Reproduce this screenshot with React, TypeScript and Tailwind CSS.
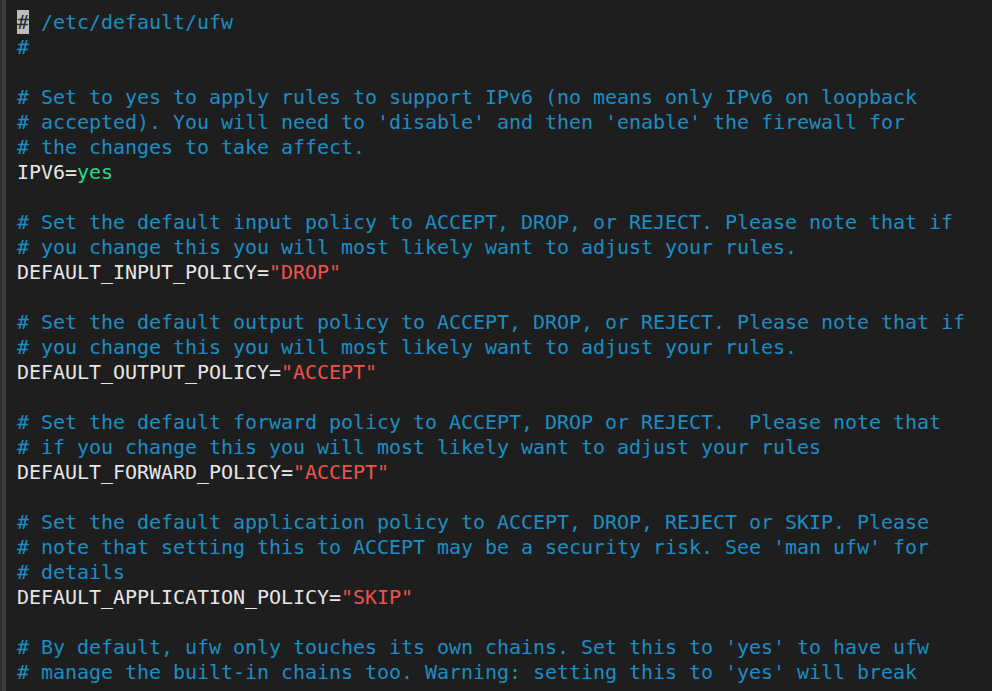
const lines: [string, 'c' | 'kv', string?][] = [
  ['# /etc/default/ufw', 'c'],
  ['#', 'c'],
  ['', 'c'],
  ['# Set to yes to apply rules to support IPv6 (no means only IPv6 on loopback', 'c'],
  ["# accepted). You will need to 'disable' and then 'enable' the firewall for", 'c'],
  ['# the changes to take affect.', 'c'],
  ['IPV6=', 'kv', 'yes'],
  ['', 'c'],
  ['# Set the default input policy to ACCEPT, DROP, or REJECT. Please note that if', 'c'],
  ['# you change this you will most likely want to adjust your rules.', 'c'],
  ['DEFAULT_INPUT_POLICY=', 'kv', '"DROP"'],
  ['', 'c'],
  ['# Set the default output policy to ACCEPT, DROP, or REJECT. Please note that if', 'c'],
  ['# you change this you will most likely want to adjust your rules.', 'c'],
  ['DEFAULT_OUTPUT_POLICY=', 'kv', '"ACCEPT"'],
  ['', 'c'],
  ['# Set the default forward policy to ACCEPT, DROP or REJECT.  Please note that', 'c'],
  ['# if you change this you will most likely want to adjust your rules', 'c'],
  ['DEFAULT_FORWARD_POLICY=', 'kv', '"ACCEPT"'],
  ['', 'c'],
  ['# Set the default application policy to ACCEPT, DROP, REJECT or SKIP. Please', 'c'],
  ["# note that setting this to ACCEPT may be a security risk. See 'man ufw' for", 'c'],
  ['# details', 'c'],
  ['DEFAULT_APPLICATION_POLICY=', 'kv', '"SKIP"'],
  ['', 'c'],
  ["# By default, ufw only touches its own chains. Set this to 'yes' to have ufw", 'c'],
  ["# manage the built-in chains too. Warning: setting this to 'yes' will break", 'c'],
]

function Line({ text, kind, value, first }: { text: string; kind: string; value?: string; first: boolean }) {
  if (kind === 'kv') {
    return (
      <div className="h-[25px] text-[#e6e6e6]">
        {text}
        <span className={value === 'yes' ? 'text-[#2bd98c]' : 'text-[#f0524a]'}>{value}</span>
      </div>
    )
  }
  if (first) {
    // cursor block sits on the first "#"
    return (
      <div className="h-[25px] text-[#1d8dc4]">
        <span className="inline-block h-[24px] bg-[#bdbdbd] align-top text-[#2a2a2a]">#</span>
        {text.slice(1)}
      </div>
    )
  }
  return <div className="h-[25px] text-[#1d8dc4]">{text || '\u00a0'}</div>
}

export default function App() {
  return (
    <div className="flex h-[691px] w-[992px] overflow-hidden bg-[#1e1e1e]">
      {/* left gutter edge */}
      <div className="w-[2px] shrink-0 bg-[#2f2f2f]" />
      <div className="w-[4px] shrink-0 bg-[#3c3c3c]" />
      <div
        className="whitespace-pre pl-[11px] pt-[10px] text-[20px] leading-[25px] tracking-[-0.04px]"
        style={{ fontFamily: '"DejaVu Sans Mono", "Liberation Mono", monospace' }}
      >
        {lines.map(([t, k, v], i) => (
          <Line key={i} text={t} kind={k} value={v} first={i === 0} />
        ))}
      </div>
    </div>
  )
}
